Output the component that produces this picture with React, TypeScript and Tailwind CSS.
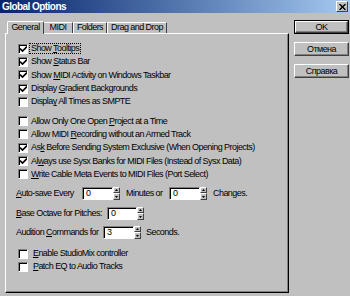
import React from 'react'

const font = { fontFamily: '"Liberation Sans", Arial, sans-serif' }

function U({ children }: { children: React.ReactNode }) {
  return <span className="underline underline-offset-1">{children}</span>
}

function Check({ on }: { on?: boolean }) {
  return (
    <div className="w-[10px] h-[10px] shrink-0 bg-white border border-t-[#808080] border-l-[#808080] border-b-white border-r-white shadow-[inset_1px_1px_0_#000] relative">
      {on && (
        <svg className="absolute left-[1px] top-[1px]" width="7" height="7" viewBox="0 0 7 7">
          <path d="M0 2.5 L2.5 5 L7 0.5" stroke="#000" strokeWidth="1.6" fill="none" />
        </svg>
      )}
    </div>
  )
}

function Row({ on, children, focus }: { on?: boolean; children: React.ReactNode; focus?: boolean }) {
  return (
    <div className="h-[13.3px] flex items-center pl-[12px] whitespace-nowrap">
      <Check on={on} />
      <span className={'ml-[2px] px-[1px] leading-none ' + (focus ? 'outline outline-1 outline-dotted outline-black' : '')}>
        {children}
      </span>
    </div>
  )
}

function Spin({ value, w }: { value: string; w: string }) {
  return (
    <div className="flex items-center shrink-0">
      <div className={w + ' h-[13px] bg-white border border-t-[#808080] border-l-[#808080] border-b-white border-r-white shadow-[inset_1px_1px_0_#000] pl-[3px] flex items-center leading-none'}>
        {value}
      </div>
      <div className="w-[7px] h-[13px] flex flex-col">
        <div className="flex-1 bg-[#c0c0c0] border-t border-l border-white border-b border-r border-b-[#404040] border-r-[#404040] flex items-center justify-center">
          <svg width="3" height="2" viewBox="0 0 3 2"><path d="M1.5 0 L3 2 L0 2Z" fill="#000" /></svg>
        </div>
        <div className="flex-1 bg-[#c0c0c0] border-t border-l border-white border-b border-r border-b-[#404040] border-r-[#404040] flex items-center justify-center">
          <svg width="3" height="2" viewBox="0 0 3 2"><path d="M0 0 L3 0 L1.5 2Z" fill="#000" /></svg>
        </div>
      </div>
    </div>
  )
}

function Btn({ label, def }: { label: string; def?: boolean }) {
  return (
    <div className={'w-[55px] h-[14px] ' + (def ? 'border border-black' : '')}>
      <div className="w-full h-full bg-[#c0c0c0] border border-t-white border-l-white border-b-[#404040] border-r-[#404040] shadow-[inset_-1px_-1px_0_#808080] flex items-center justify-center leading-none">
        {label}
      </div>
    </div>
  )
}

export default function App() {
  return (
    <div className="w-[350px] h-[296px] bg-[#c0c0c0] text-black text-[9px] tracking-[-0.55px] overflow-hidden flex flex-col" style={font}>
      <div className="h-[13px] bg-linear-to-r from-[#0a246a] to-[#a6caf0] flex items-center justify-between pl-[2px] pr-[2px]">
        <span className="text-white font-bold text-[10px] tracking-[-0.55px] leading-none">Global Options</span>
        <div className="w-[12px] h-[11px] bg-[#c0c0c0] border border-t-white border-l-white border-b-[#404040] border-r-[#404040] flex items-center justify-center">
          <svg width="7" height="6" viewBox="0 0 7 6"><path d="M0.5 0 L6.5 6 M6.5 0 L0.5 6" stroke="#000" strokeWidth="1.4" /></svg>
        </div>
      </div>

      <div className="flex flex-1 pl-[5px] pt-[8px] pb-[3px]">
        <div className="w-[284px] flex flex-col">
          <div className="flex items-end h-[12px] pl-[2px] whitespace-nowrap">
            <div className="w-[37px] h-[13px] bg-[#c0c0c0] border border-b-0 border-t-white border-l-white border-r-[#404040] rounded-t-[2px] flex items-center justify-center relative z-10 -mb-[1px]">General</div>
            <div className="w-[29px] h-[11px] border border-b-0 border-t-white border-l-0 border-r-[#404040] flex items-center justify-center">MIDI</div>
            <div className="w-[34px] h-[11px] border border-b-0 border-t-white border-l-white border-r-[#404040] flex items-center justify-center">Folders</div>
            <div className="w-[60px] h-[11px] border border-b-0 border-t-white border-l-white border-r-[#404040] flex items-center justify-center">Drag and Drop</div>
          </div>
          <div className="flex-1 border border-t-white border-l-white border-b-black border-r-black shadow-[inset_-1px_-1px_0_#808080] pt-[8px]">
            <Row on focus>Show <U>T</U>ooltips</Row>
            <Row on>Show <U>S</U>tatus Bar</Row>
            <Row on>Show <U>M</U>IDI Activity on Windows Taskbar</Row>
            <Row on>Display <U>G</U>radient Backgrounds</Row>
            <Row>Displa<U>y</U> All Times as SMPTE</Row>
            <div className="h-[6px]" />
            <Row>Allow Only One Open <U>P</U>roject at a Time</Row>
            <Row>Allow MIDI <U>R</U>ecording without an Armed Track</Row>
            <Row on>As<U>k</U> Before Sending System Exclusive (When Opening Projects)</Row>
            <Row on>Al<U>w</U>ays use Sysx Banks for MIDI Files (Instead of Sysx Data)</Row>
            <Row><U>W</U>rite Cable Meta Events to MIDI Files (Port Select)</Row>

            <div className="mt-[6px] pl-[10px] flex items-center h-[13px] whitespace-nowrap">
              <div className="w-[66px] shrink-0"><U>A</U>uto-save Every</div>
              <Spin value="0" w="w-[31px]" />
              <div className="ml-[6px] w-[43px] shrink-0">Minutes or</div>
              <Spin value="0" w="w-[31px]" />
              <div className="ml-[6px]">Changes.</div>
            </div>
            <div className="mt-[7px] pl-[10px] flex items-center h-[13px] whitespace-nowrap">
              <div className="w-[91px] shrink-0"><U>B</U>ase Octave for Pitches:</div>
              <Spin value="0" w="w-[30px]" />
            </div>
            <div className="mt-[6px] pl-[10px] flex items-center h-[13px] whitespace-nowrap">
              <div className="w-[87px] shrink-0">Audition <U>C</U>ommands for</div>
              <Spin value="3" w="w-[31px]" />
              <div className="ml-[5px]">Seconds.</div>
            </div>

            <div className="mt-[8px]">
              <Row>&nbsp;<U>E</U>nable StudioMix controller</Row>
              <Row>&nbsp;<U>P</U>atch EQ to Audio Tracks</Row>
            </div>
          </div>
        </div>

        <div className="flex flex-col gap-[8px] pl-[5px] -mt-[1px]">
          <Btn label="OK" def />
          <Btn label="Отмена" />
          <Btn label="Справка" />
        </div>
      </div>
    </div>
  )
}
